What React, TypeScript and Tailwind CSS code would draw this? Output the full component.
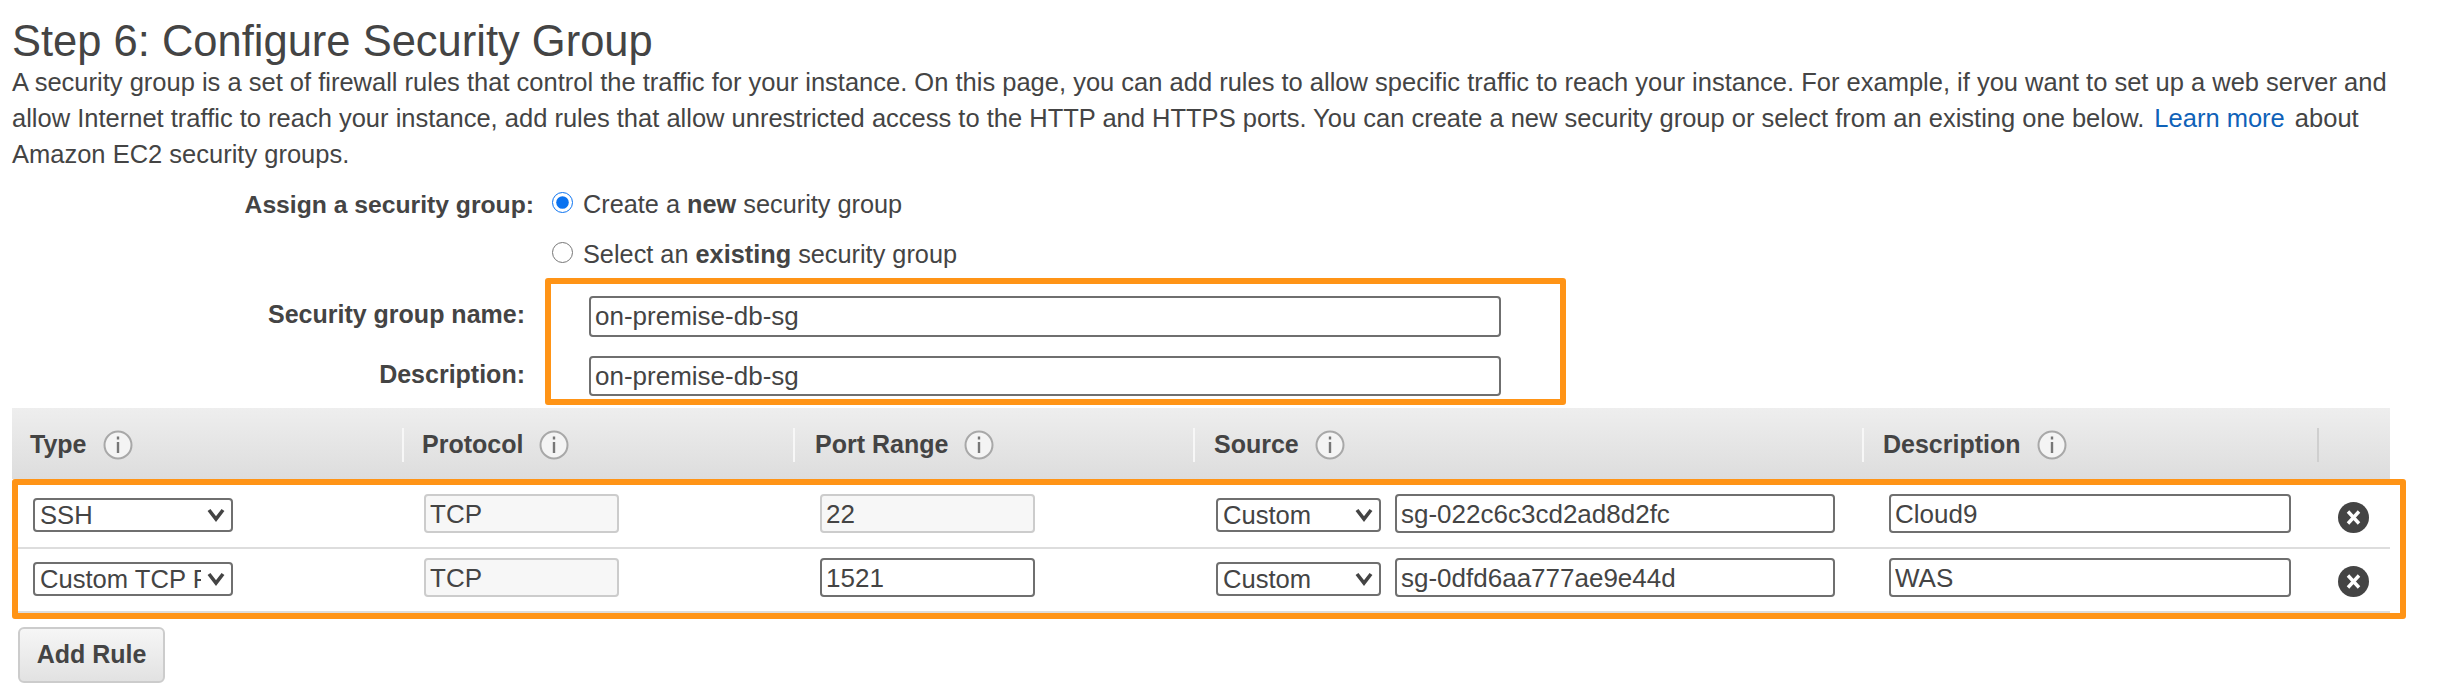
const columns = [
  { label: 'Type', cell: 'pl-[18px]' },
  { label: 'Protocol', cell: 'pl-[18px] border-l-2 border-[#f7f7f7]' },
  { label: 'Port Range', cell: 'pl-[20px] border-l-2 border-[#f7f7f7]' },
  { label: 'Source', cell: 'pl-[19px] border-l-2 border-[#f7f7f7]' },
  { label: 'Description', cell: 'pl-[19px] border-l-2 border-[#f7f7f7]' },
];

const rules = [
  { type: 'SSH', protocol: 'TCP', port: '22', portLocked: true, source: 'sg-022c6c3cd2ad8d2fc', description: 'Cloud9' },
  { type: 'Custom TCP Rule', protocol: 'TCP', port: '1521', portLocked: false, source: 'sg-0dfd6aa777ae9e44d', description: 'WAS' },
];

function InfoIcon() {
  return (
    <svg width="30" height="30" viewBox="0 0 30 30" className="shrink-0">
      <circle cx="15" cy="15" r="13.5" fill="#f4f4f4" stroke="#a8a8a8" strokeWidth="2" />
      <rect x="13.8" y="12" width="2.4" height="11" fill="#777777" />
      <rect x="13.8" y="6.5" width="2.4" height="3" fill="#777777" />
    </svg>
  );
}

function RemoveIcon() {
  return (
    <svg width="31" height="31" viewBox="0 0 31 31">
      <circle cx="15.5" cy="15.5" r="15.5" fill="#444444" />
      <path d="M10 9.5 L21 21.5 M21 9.5 L10 21.5" stroke="#ffffff" strokeWidth="3.4" />
    </svg>
  );
}

function Select({ value, width }: { value: string; width: string }) {
  return (
    <div className={`relative shrink-0 mt-[4px] ${width}`}>
      <select
        defaultValue={value}
        className="appearance-none w-full h-[34px] pl-[5px] pr-[30px] bg-white border-2 border-[#6f6f6f] rounded-[4px] text-[25.6px] leading-[30px] text-[#444444] outline-none"
      >
        <option value={value}>{value}</option>
      </select>
      <svg width="18" height="14" viewBox="0 0 18 14" className="absolute right-[8px] top-[10px] pointer-events-none">
        <path d="M2 2 L9 11 L16 2" fill="none" stroke="#444444" strokeWidth="3.6" />
      </svg>
    </div>
  );
}

function TextInput({ value, width, locked }: { value: string; width: string; locked?: boolean }) {
  return (
    <input
      type="text"
      readOnly
      value={value}
      className={`pl-[4px] pr-[5px] rounded-[4px] border-2 text-[26px] text-[#444444] outline-none shrink-0 ${width} ${
        locked ? 'bg-[#f7f7f7] border-[#cccccc]' : 'bg-white border-[#6f6f6f]'
      }`}
    />
  );
}

export default function App() {
  return (
    <div className="bg-white text-[#444444] font-['Liberation_Sans',Arial,sans-serif] w-[2448px] h-[698px] overflow-hidden pt-[18px] pl-[12px]">
      <h1 className="text-[43.5px] leading-[46px] font-normal">Step 6: Configure Security Group</h1>
      <p className="text-[25.5px] leading-[36px] w-[2400px]">
        A security group is a set of firewall rules that control the traffic for your instance. On this page, you can add rules to allow specific traffic to reach your instance. For example, if you want to set up a web server and allow Internet traffic to reach your instance, add rules that allow unrestricted access to the HTTP and HTTPS ports. You can create a new security group or select from an existing one below.{' '}
        <a className="text-[#0f62b8] ml-[3px] mr-[3px]">Learn more</a> about Amazon EC2 security groups.
      </p>

      <div className="flex items-center h-[50px] mt-[8px]">
        <div className="w-[522px] text-right text-[24.7px] font-bold">Assign a security group:</div>
        <input type="radio" name="sg" defaultChecked className="ml-[18px] w-[21px] h-[21px] m-0 accent-[#0a72f0] -mt-[6px]" />
        <label className="ml-[10px] text-[25.3px]">Create a <b>new</b> security group</label>
      </div>
      <div className="flex items-center h-[48px] pt-[2px]">
        <input type="radio" name="sg" className="ml-[540px] w-[21px] h-[21px] m-0 -mt-[6px]" />
        <label className="ml-[10px] text-[25.3px]">Select an <b>existing</b> security group</label>
      </div>

      <div className="flex">
        <div className="w-[513px] text-right text-[25px] font-bold pt-[18px]">
          <div className="h-[60px]">Security group name:</div>
          <div>Description:</div>
        </div>
        <div className="ml-[20px] w-[1021px] h-[127px] border-[6px] border-[#ff9416] rounded-[3px] pl-[38px] pt-[12px] flex flex-col gap-[19px]">
          <TextInput value="on-premise-db-sg" width="w-[912px] h-[41px]" />
          <TextInput value="on-premise-db-sg" width="w-[912px] h-[40px]" />
        </div>
      </div>

      <div className="mt-[3px] w-[2378px] h-[71px] pt-[3px] bg-gradient-to-b from-[#eeeeee] to-[#dddddd] grid grid-cols-[390px_391px_400px_669px_455px_73px] items-center">
        {columns.map((col) => (
          <div key={col.label} className={`h-[34px] flex items-center gap-[16px] text-[25px] font-bold ${col.cell}`}>
            <span>{col.label}</span>
            <InfoIcon />
          </div>
        ))}
        <div className="h-[34px] border-l-2 border-[#cfcfcf]" />
      </div>

      <div className="w-[2394px] h-[140px] border-[6px] border-[#ff9416] rounded-[3px]">
        {rules.map((rule) => (
          <div
            key={rule.source}
            className="w-[2372px] h-[64px] pl-[15px] pt-[9px] border-b-2 border-[#dddddd] grid grid-cols-[391px_396px_396px_673px_449px_31px]"
          >
            <Select value={rule.type} width="w-[200px]" />
            <div><TextInput value={rule.protocol} width="w-[195px] h-[39px] pt-[2px]" locked /></div>
            <div><TextInput value={rule.port} width="w-[215px] h-[39px] pt-[2px]" locked={rule.portLocked} /></div>
            <div className="flex items-start gap-[14px]">
              <Select value="Custom" width="w-[165px]" />
              <TextInput value={rule.source} width="w-[440px] h-[39px] pt-[2px]" />
            </div>
            <div><TextInput value={rule.description} width="w-[402px] h-[39px] pt-[2px]" /></div>
            <div className="pt-[8px]"><RemoveIcon /></div>
          </div>
        ))}
      </div>

      <button className="mt-[8px] ml-[6px] w-[147px] h-[56px] rounded-[6px] border-2 border-[#cccccc] bg-gradient-to-b from-[#f6f6f6] to-[#e2e2e2] text-[25px] font-bold text-[#444444]">
        Add Rule
      </button>
    </div>
  );
}
